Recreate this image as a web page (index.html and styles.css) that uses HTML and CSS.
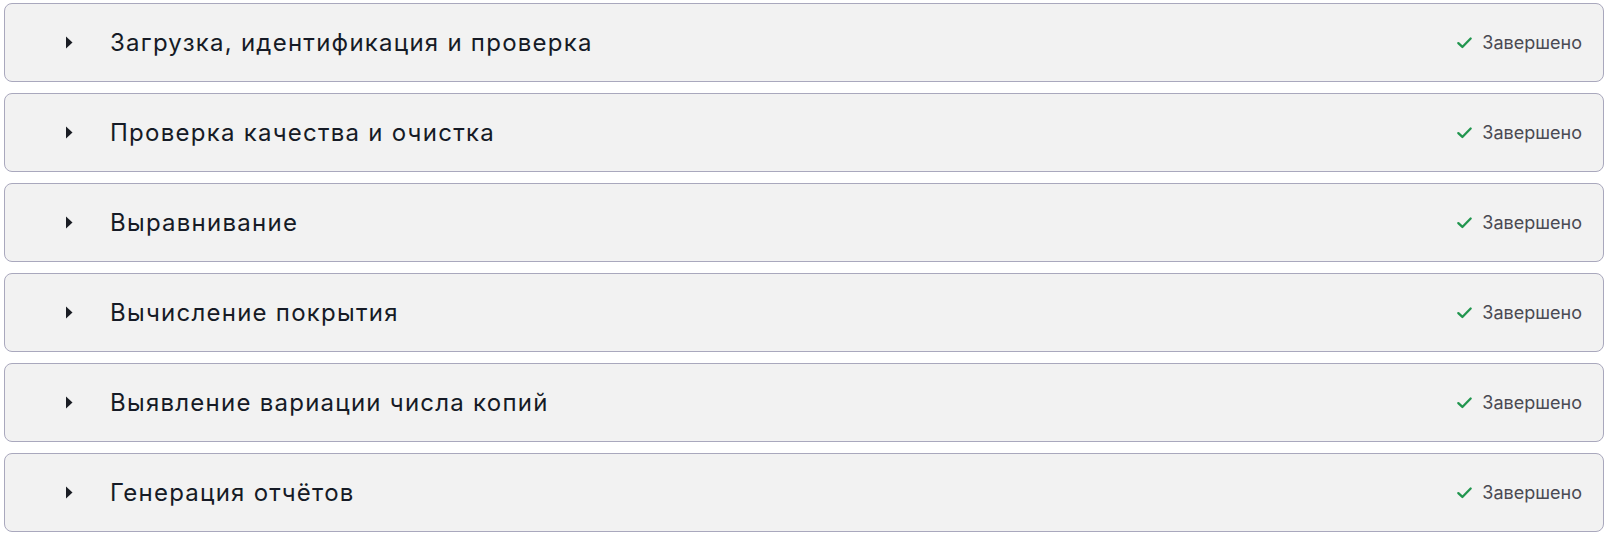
FILE: index.html
```html
<!DOCTYPE html>
<html lang="ru">
<head>
<meta charset="utf-8">
<link rel="stylesheet" href="styles.css">
</head>
<body>
<div class="list">
  <div class="step">
    <div class="left">
      <svg class="caret" viewBox="0 0 8 13" width="8" height="13"><path d="M1 0.5 L7.5 6.5 L1 12.5 Z" fill="#1a1d24"/></svg>
      <span class="title">Загрузка, идентификация и проверка</span>
    </div>
    <div class="status"><svg class="check" viewBox="0 0 16 16" width="17" height="17"><path d="M2.2 8.6 L6 12.2 L13.8 4.2" fill="none" stroke="#22964f" stroke-width="2.2" stroke-linecap="round" stroke-linejoin="round"/></svg><span>Завершено</span></div>
  </div>
  <div class="step">
    <div class="left">
      <svg class="caret" viewBox="0 0 8 13" width="8" height="13"><path d="M1 0.5 L7.5 6.5 L1 12.5 Z" fill="#1a1d24"/></svg>
      <span class="title">Проверка качества и очистка</span>
    </div>
    <div class="status"><svg class="check" viewBox="0 0 16 16" width="17" height="17"><path d="M2.2 8.6 L6 12.2 L13.8 4.2" fill="none" stroke="#22964f" stroke-width="2.2" stroke-linecap="round" stroke-linejoin="round"/></svg><span>Завершено</span></div>
  </div>
  <div class="step">
    <div class="left">
      <svg class="caret" viewBox="0 0 8 13" width="8" height="13"><path d="M1 0.5 L7.5 6.5 L1 12.5 Z" fill="#1a1d24"/></svg>
      <span class="title">Выравнивание</span>
    </div>
    <div class="status"><svg class="check" viewBox="0 0 16 16" width="17" height="17"><path d="M2.2 8.6 L6 12.2 L13.8 4.2" fill="none" stroke="#22964f" stroke-width="2.2" stroke-linecap="round" stroke-linejoin="round"/></svg><span>Завершено</span></div>
  </div>
  <div class="step">
    <div class="left">
      <svg class="caret" viewBox="0 0 8 13" width="8" height="13"><path d="M1 0.5 L7.5 6.5 L1 12.5 Z" fill="#1a1d24"/></svg>
      <span class="title">Вычисление покрытия</span>
    </div>
    <div class="status"><svg class="check" viewBox="0 0 16 16" width="17" height="17"><path d="M2.2 8.6 L6 12.2 L13.8 4.2" fill="none" stroke="#22964f" stroke-width="2.2" stroke-linecap="round" stroke-linejoin="round"/></svg><span>Завершено</span></div>
  </div>
  <div class="step">
    <div class="left">
      <svg class="caret" viewBox="0 0 8 13" width="8" height="13"><path d="M1 0.5 L7.5 6.5 L1 12.5 Z" fill="#1a1d24"/></svg>
      <span class="title">Выявление вариации числа копий</span>
    </div>
    <div class="status"><svg class="check" viewBox="0 0 16 16" width="17" height="17"><path d="M2.2 8.6 L6 12.2 L13.8 4.2" fill="none" stroke="#22964f" stroke-width="2.2" stroke-linecap="round" stroke-linejoin="round"/></svg><span>Завершено</span></div>
  </div>
  <div class="step">
    <div class="left">
      <svg class="caret" viewBox="0 0 8 13" width="8" height="13"><path d="M1 0.5 L7.5 6.5 L1 12.5 Z" fill="#1a1d24"/></svg>
      <span class="title">Генерация отчётов</span>
    </div>
    <div class="status"><svg class="check" viewBox="0 0 16 16" width="17" height="17"><path d="M2.2 8.6 L6 12.2 L13.8 4.2" fill="none" stroke="#22964f" stroke-width="2.2" stroke-linecap="round" stroke-linejoin="round"/></svg><span>Завершено</span></div>
  </div>
</div>
</body>
</html>
```
FILE: styles.css
```css
html, body {
  margin: 0;
  padding: 0;
  background: #ffffff;
}
body {
  font-family: Inter, "Noto Sans", sans-serif;
  padding: 3px 4px 4px 4px;
}
.list {
  display: flex;
  flex-direction: column;
  gap: 11px;
}
.step {
  box-sizing: border-box;
  height: 79px;
  border: 1px solid #a9a8bd;
  border-radius: 8px;
  background: #f2f2f2;
  display: flex;
  align-items: center;
  justify-content: space-between;
  padding: 0 21px 0 60px;
}
.left {
  display: flex;
  align-items: center;
}
.caret {
  display: block;
  margin-right: 37px;
}
.title {
  font-size: 24px;
  color: #161b26;
  letter-spacing: 1.25px;
}
.status {
  display: flex;
  align-items: center;
  gap: 9px;
  font-size: 18px;
  color: #4a4a52;
}
.check {
  display: block;
}
```
